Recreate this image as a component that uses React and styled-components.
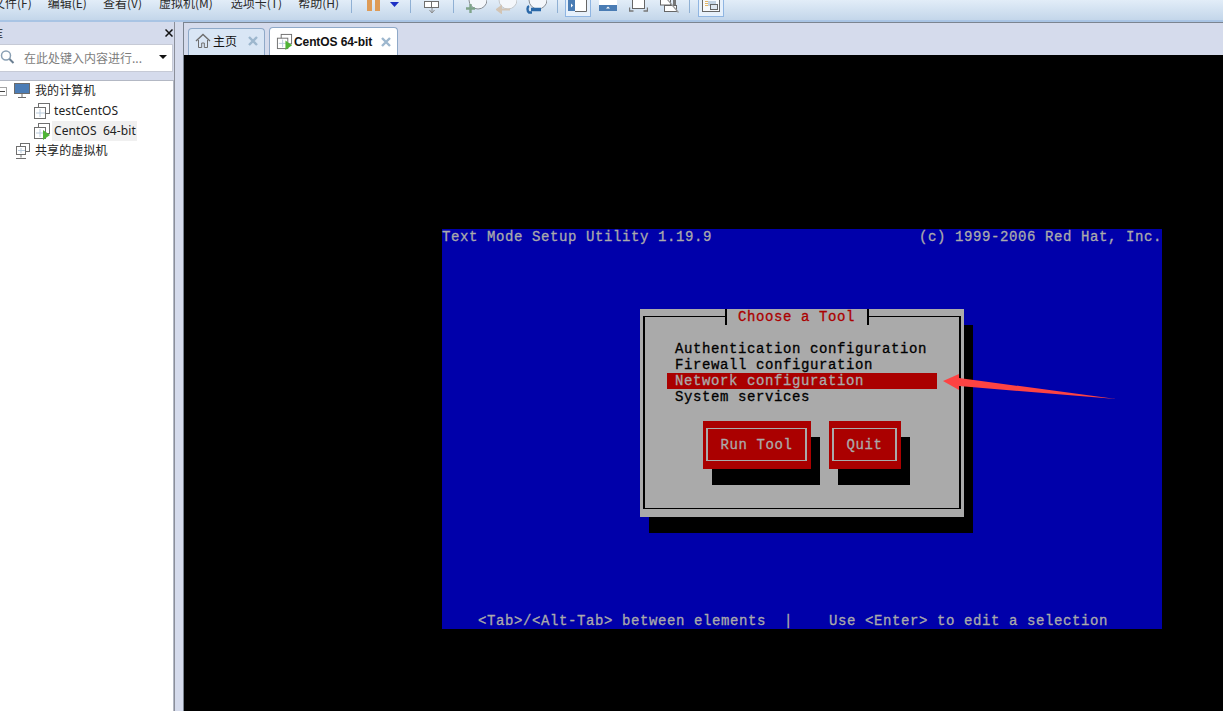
import React from "react";
import styled, { createGlobalStyle } from "styled-components";

const GlobalStyle = createGlobalStyle`
  html, body {
    margin: 0;
    padding: 0;
    height: 100%;
    overflow: hidden;
    background: #d5dbec;
  }
  #root {
    height: 100%;
  }
`;

const Page = styled.div`
  display: flex;
  flex-direction: column;
  height: 711px;
  width: 1223px;
  overflow: hidden;
  font-family: "Noto Sans", "Noto Sans CJK SC", sans-serif;
  font-size: 12px;
  color: #1c1c1c;
`;

const Toolbar = styled.div`
  display: flex;
  align-items: flex-start;
  flex: none;
  height: 20px;
  overflow: hidden;
  background: linear-gradient(#e2edf8, #c3d6ea);
  border-bottom: 2px solid #a9c4e4;
`;

const MenuItem = styled.span`
  flex: none;
  margin-top: -5px;
  margin-left: ${(p) => p.$ml ?? 16}px;
  line-height: 16px;
  font-family: "Noto Sans CJK SC", sans-serif;
  font-size: 12px;
  color: #2a2a2a;
`;

const Sep = styled.i`
  flex: none;
  width: 1px;
  height: 13px;
  margin-left: ${(p) => p.$ml}px;
  background: #8fb0d4;
`;

const ToolIcon = styled.svg`
  flex: none;
  display: block;
  margin-left: ${(p) => p.$ml}px;
`;

const ToggleButton = styled.div`
  flex: none;
  display: flex;
  justify-content: center;
  width: 26px;
  height: 17px;
  margin-left: ${(p) => p.$ml}px;
  box-sizing: border-box;
  border: 1px solid #8fb5e2;
  border-top: none;
  background: #e6f0fb;
`;

const Body = styled.div`
  display: flex;
  flex: 1;
  min-height: 0;
`;

const Sidebar = styled.aside`
  display: flex;
  flex-direction: column;
  flex: none;
  width: 174px;
  box-sizing: border-box;
`;

const SideHead = styled.div`
  display: flex;
  justify-content: space-between;
  align-items: center;
  height: 22px;
  flex: none;
  font-size: 12px;
  color: #222;
`;

const SideTitle = styled.span`
  margin-left: -9px;
  font-family: "Noto Sans CJK SC", sans-serif;
`;

const CloseGlyph = styled.svg`
  display: block;
  margin-right: 1px;
`;

const SearchBox = styled.div`
  display: flex;
  align-items: center;
  flex: none;
  height: 28px;
  box-sizing: border-box;
  margin-right: 1px;
  padding-bottom: 2px;
  background: #fff;
  border: 1px solid #c6cad6;
  border-left: none;
`;

const SearchText = styled.span`
  flex: 1;
  margin-left: 9px;
  font-family: "Noto Sans CJK SC", sans-serif;
  font-size: 12px;
  color: #7d7d7d;
`;

const Caret = styled.i`
  width: 0;
  height: 0;
  margin-right: 5px;
  border-left: 4px solid transparent;
  border-right: 4px solid transparent;
  border-top: 4px solid #111;
`;

const Tree = styled.div`
  flex: 1;
  margin-top: 8px;
  background: #fff;
  border: 1px solid #b3b8c4;
  border-left: none;
  border-bottom: none;
`;

const TreeRow = styled.div`
  display: flex;
  align-items: center;
  height: 20px;
  padding-left: ${(p) => p.$indent}px;
`;

const Expander = styled.i`
  position: relative;
  flex: none;
  width: 7px;
  height: 9px;
  margin-right: 7px;
  box-sizing: border-box;
  border: 1px solid #a4a4a4;
  border-left: none;
  &::after {
    content: "";
    position: absolute;
    left: 0;
    right: 1px;
    top: 3px;
    height: 1px;
    background: #444;
  }
`;

const TreeLabel = styled.span`
  margin-left: ${(p) => p.$ml ?? 1}px;
  padding: 0 1px 0 2px;
  line-height: 20px;
  font-size: 12px;
  letter-spacing: 0.1px;
  word-spacing: 3px;
  color: #222;
  background: ${(p) => (p.$selected ? "#f0f0f0" : "transparent")};
`;

const Splitter = styled.div`
  flex: none;
  width: 8px;
  background: #d5dbec;
  border-left: 1px solid #8b8f9a;
  box-sizing: content-box;
`;

const Main = styled.main`
  display: flex;
  flex-direction: column;
  flex: 1;
  min-width: 0;
  border-left: 1px solid #7b8490;
  border-top: 1px solid #7b8490;
`;

const TabStrip = styled.div`
  display: flex;
  align-items: flex-end;
  gap: 4px;
  flex: none;
  height: 32px;
  padding-left: 4px;
  background: #d5dbec;
`;

const Tab = styled.div`
  display: flex;
  align-items: center;
  box-sizing: border-box;
  width: ${(p) => p.$width}px;
  height: ${(p) => (p.$active ? 28 : 27)}px;
  padding: ${(p) => (p.$active ? "0 6px" : "0 6px 2px")};
  background: ${(p) => (p.$active ? "#fff" : "#d9e6f5")};
  border: 1px solid #8fa9c8;
  border-bottom: none;
  border-radius: 4px 4px 0 0;
`;

const TabLabel = styled.span`
  flex: 1;
  margin-left: ${(p) => p.$ml}px;
  margin-bottom: ${(p) => (p.$active ? 0 : 2)}px;
  font-family: ${(p) => (p.$active ? '"Liberation Sans"' : '"Noto Sans CJK SC"')}, sans-serif;
  font-weight: ${(p) => (p.$active ? 700 : 400)};
  font-size: 12px;
  letter-spacing: ${(p) => (p.$active ? -0.1 : 0)}px;
  color: #111;
`;

const Stage = styled.div`
  flex: 1;
  padding: 174px 0 0 258px;
  background: #000;
  overflow: hidden;
`;

const Terminal = styled.div`
  position: relative;
  display: flex;
  flex-direction: column;
  justify-content: space-between;
  width: 720px;
  height: 400px;
  background: #0000aa;
  font-family: "Liberation Mono", monospace;
  font-size: 14px;
  letter-spacing: 0.6px;
  line-height: 16px;
  color: #aaa;
  white-space: pre;
  -webkit-text-stroke: 0.3px currentColor;
`;

const TermLine = styled.div`
  display: flex;
  justify-content: space-between;
`;

const Dialog = styled.div`
  position: absolute;
  left: 198px;
  top: 80px;
  width: 324px;
  height: 208px;
  box-sizing: border-box;
  padding: 7px 3px 8px;
  background: #aaa;
  color: #000;
  box-shadow: 9px 16px 0 #000;
`;

const Frame = styled.div`
  position: relative;
  height: 100%;
  box-sizing: border-box;
  border-style: solid;
  border-color: #000;
  border-width: 1px 2px;
`;

const DialogTitle = styled.div`
  position: absolute;
  left: 80px;
  top: -8px;
  width: 144px;
  height: 16px;
  box-sizing: border-box;
  padding-left: 11px;
  background: #aaa;
  border-left: 2px solid #000;
  border-right: 2px solid #000;
  color: #aa0000;
`;

const Menu = styled.div`
  width: 270px;
  margin: 24px 0 16px 22px;
`;

const MenuRow = styled.div`
  padding-left: 8px;
  background: ${(p) => (p.$active ? "#aa0000" : "transparent")};
  color: ${(p) => (p.$active ? "#aaa" : "#000")};
`;

const Buttons = styled.div`
  display: flex;
  gap: 18px;
  margin-left: 58px;
`;

const TermButton = styled.div`
  width: ${(p) => p.$width}px;
  height: 48px;
  box-sizing: border-box;
  padding: 7px 4px 8px 3px;
  background: #aa0000;
  box-shadow: 9px 16px 0 #000;
`;

const ButtonInner = styled.div`
  display: flex;
  align-items: center;
  justify-content: center;
  height: 100%;
  box-sizing: border-box;
  border-style: solid;
  border-color: #aaa;
  border-width: 1px 2px;
  color: #aaa;
`;

const Arrow = styled.svg`
  position: absolute;
  left: 501px;
  top: 145px;
`;

const Stroke = "#6f6f6f";

const VmIcon = ({ play, size = 18 }) => (
  <svg width={size} height={size} viewBox="0 0 18 18" fill="none">
    <rect x="5.5" y="1.5" width="11" height="10" fill="#fff" stroke={Stroke} />
    <rect x="1.5" y="5.5" width="11" height="11" fill="#fff" stroke={Stroke} />
    <path d="M7 7v8M3 11h9" stroke="#b9cbdc" />
    {play && <path d="M10 8l7 5-7 5z" fill="#4fb436" />}
  </svg>
);

const SharedIcon = () => (
  <svg width="17" height="18" viewBox="0 0 17 18" fill="none">
    <rect x="5.5" y="1.5" width="9" height="8" fill="#fff" stroke={Stroke} />
    <rect x="1.5" y="4.5" width="9" height="8" fill="#fff" stroke={Stroke} />
    <path d="M6 12.5v3M1 16.5h10" stroke={Stroke} />
    <path d="M6 6v5M3 8.5h7" stroke="#b9cbdc" />
  </svg>
);

const MonitorIcon = () => (
  <svg width="16" height="16" viewBox="0 0 16 16">
    <rect x="0.5" y="0.5" width="15" height="10" fill="#4b7cb5" stroke="#6b6b6b" />
    <path d="M8 11v3M4 14.5h8" stroke="#6b6b6b" fill="none" />
  </svg>
);

const HomeIcon = () => (
  <svg width="16" height="16" viewBox="0 0 16 16" fill="none">
    <path d="M1 8l7-6.5L15 8" stroke="#6e6e6e" strokeWidth="1.4" />
    <path d="M3.5 7v7.5h3.2v-4.5h2.6v4.5h3.2V7" stroke="#6e6e6e" />
  </svg>
);

const CloseX = ({ color = "#9db7ce" }) => (
  <svg width="10" height="10" viewBox="0 0 10 10">
    <path d="M1 1l8 8M9 1l-8 8" stroke={color} strokeWidth="2.4" />
  </svg>
);

const Magnifier = () => (
  <svg width="15" height="16" viewBox="0 0 15 16" fill="none">
    <circle cx="6" cy="6.5" r="4.5" stroke="#8aa0b4" strokeWidth="1.5" />
    <path d="M9.5 10l4 4" stroke="#6b7f92" strokeWidth="2" />
  </svg>
);

const Clock = ({ cx, color }) => (
  <circle cx={cx} cy="0" r="9" fill="#f4f7fb" stroke={color} strokeWidth="1" />
);

const App = () => (
  <Page>
    <GlobalStyle />
    <Toolbar>
      <MenuItem $ml={-7}>文件(F)</MenuItem>
      <MenuItem>编辑(E)</MenuItem>
      <MenuItem>查看(V)</MenuItem>
      <MenuItem $ml={17}>虚拟机(M)</MenuItem>
      <MenuItem $ml={18}>选项卡(T)</MenuItem>
      <MenuItem $ml={16}>帮助(H)</MenuItem>
      <Sep $ml={12} />
      <ToolIcon $ml={15} width="14" height="12" viewBox="0 0 14 12">
        <path d="M0 0h5v11H0zM8 0h5v11H8z" fill="#de9b57" />
      </ToolIcon>
      <ToolIcon $ml={9} width="9" height="8" viewBox="0 0 9 8">
        <path d="M0 2h9L4.5 7z" fill="#1c2fc4" />
      </ToolIcon>
      <Sep $ml={11} />
      <ToolIcon $ml={12} width="18" height="14" viewBox="0 0 18 14" fill="none">
        <rect x="1.5" y="1.5" width="7" height="6" fill="#fff" stroke="#6f6f6f" />
        <rect x="8.5" y="1.5" width="7" height="6" fill="#fff" stroke="#6f6f6f" />
        <path d="M9 8v4M6.5 10L9 13l2.500-3" stroke="#8a8a8a" />
      </ToolIcon>
      <Sep $ml={12} />
      <ToolIcon $ml={12} width="21" height="14" viewBox="0 0 21 14" fill="none">
        <Clock cx={12} color="#8a8f95" />
        <path d="M4.500 4v9M0 8.500h9" stroke="#7fa48a" strokeWidth="2.400" />
      </ToolIcon>
      <ToolIcon $ml={9} width="21" height="14" viewBox="0 0 21 14" fill="none">
        <Clock cx={12} color="#c4c8cc" />
        <path d="M14 9.500H5M5 6.500L1 9.500l4 3z" fill="#d2c4b4" stroke="#d2c4b4" strokeWidth="2" />
      </ToolIcon>
      <ToolIcon $ml={9} width="21" height="14" viewBox="0 0 21 14" fill="none">
        <Clock cx={12} color="#8a8f95" />
        <path d="M5 9.500h10" stroke="#2a68a8" strokeWidth="3.500" />
        <path d="M3 6c-2 1-2 5 0 6.500h3" stroke="#2a68a8" strokeWidth="2.400" />
      </ToolIcon>
      <Sep $ml={10} />
      <ToggleButton $ml={7}>
        <svg width="19" height="12" viewBox="0 0 19 12">
          <rect x="0" y="0" width="19" height="11" fill="#fff" />
          <rect x="0" y="0" width="7" height="11" fill="#4a7cb4" />
          <path d="M3 3.500l2 2-2 2z" fill="#fff" />
          <path d="M18.500 0v11.500H7" stroke="#666" fill="none" />
        </svg>
      </ToggleButton>
      <ToolIcon $ml={8} width="19" height="12" viewBox="0 0 19 12">
        <rect x="0" y="0" width="18" height="5" fill="#fff" />
        <rect x="0" y="5" width="18" height="6" fill="#4a7cb4" />
        <path d="M7 8.500l2-2 2 2z" fill="#fff" />
      </ToolIcon>
      <ToolIcon $ml={11} width="19" height="12" viewBox="0 0 19 12" fill="none">
        <rect x="3.500" y="-1" width="12" height="9.500" fill="#fff" stroke="#666" />
        <path d="M0.500 7.500v3.500h4M18.500 7.500v3.500h-4" stroke="#777" strokeWidth="1.400" />
      </ToolIcon>
      <ToolIcon $ml={12} width="19" height="13" viewBox="0 0 19 13" fill="none">
        <rect x="0.500" y="-2" width="10" height="7" fill="#fff" stroke="#666" />
        <rect x="4.500" y="5.500" width="12" height="6" fill="#fff" stroke="#666" />
        <path d="M13 0h3v5h-3z" fill="#777" />
        <path d="M7 -1L18.500 12.500" stroke="#9a9a9a" strokeWidth="1.200" />
      </ToolIcon>
      <Sep $ml={10} />
      <ToggleButton $ml={8}>
        <svg width="18" height="13" viewBox="0 0 18 13" fill="none">
          <rect x="0.500" y="-1" width="17" height="12.500" fill="#f7f9fc" stroke="#666" />
          <path d="M3 1.500h3M3 3.500h3M3 5.500h3" stroke="#e2b566" />
          <rect x="6" y="1" width="8" height="5" fill="#c3d2e2" />
          <rect x="8.500" y="4.500" width="7" height="5" fill="#dfe7f0" stroke="#666" />
        </svg>
      </ToggleButton>
    </Toolbar>
    <Body>
      <Sidebar>
        <SideHead>
          <SideTitle>库</SideTitle>
          <CloseGlyph width="8" height="8" viewBox="0 0 8 8">
            <path d="M0.500 0.500l7 7M7.500 0.500l-7 7" stroke="#111" strokeWidth="1.500" />
          </CloseGlyph>
        </SideHead>
        <SearchBox>
          <Magnifier />
          <SearchText>在此处键入内容进行...</SearchText>
          <Caret />
        </SearchBox>
        <Tree>
          <TreeRow $indent={0}>
            <Expander />
            <MonitorIcon />
            <TreeLabel $ml={3}>我的计算机</TreeLabel>
          </TreeRow>
          <TreeRow $indent={33}>
            <VmIcon />
            <TreeLabel>testCentOS</TreeLabel>
          </TreeRow>
          <TreeRow $indent={33}>
            <VmIcon play />
            <TreeLabel $selected>CentOS 64-bit</TreeLabel>
          </TreeRow>
          <TreeRow $indent={15}>
            <SharedIcon />
            <TreeLabel>共享的虚拟机</TreeLabel>
          </TreeRow>
        </Tree>
      </Sidebar>
      <Splitter />
      <Main>
        <TabStrip>
          <Tab $width={77}>
            <HomeIcon />
            <TabLabel $ml={2}>主页</TabLabel>
            <CloseX />
          </Tab>
          <Tab $width={129} $active>
            <VmIcon play size={17} />
            <TabLabel $ml={1} $active>
              CentOS 64-bit
            </TabLabel>
            <CloseX />
          </Tab>
        </TabStrip>
        <Stage>
          <Terminal>
            <TermLine>
              <span>Text Mode Setup Utility 1.19.9</span>
              <span>(c) 1999-2006 Red Hat, Inc.</span>
            </TermLine>
            <Dialog>
              <Frame>
                <DialogTitle>Choose a Tool</DialogTitle>
                <Menu>
                  <MenuRow>Authentication configuration</MenuRow>
                  <MenuRow>Firewall configuration</MenuRow>
                  <MenuRow $active>Network configuration</MenuRow>
                  <MenuRow>System services</MenuRow>
                </Menu>
                <Buttons>
                  <TermButton $width={108}>
                    <ButtonInner>Run Tool</ButtonInner>
                  </TermButton>
                  <TermButton $width={72}>
                    <ButtonInner>Quit</ButtonInner>
                  </TermButton>
                </Buttons>
              </Frame>
            </Dialog>
            <TermLine>
              <span>{"    <Tab>/<Alt-Tab> between elements  |    Use <Enter> to edit a selection"}</span>
            </TermLine>
            <Arrow width="175" height="26" viewBox="0 0 175 26">
              <path d="M0 7L16 0l0 4L173 25 16 12l0 4z" fill="#fd4343" />
            </Arrow>
          </Terminal>
        </Stage>
      </Main>
    </Body>
  </Page>
);

export default App;
